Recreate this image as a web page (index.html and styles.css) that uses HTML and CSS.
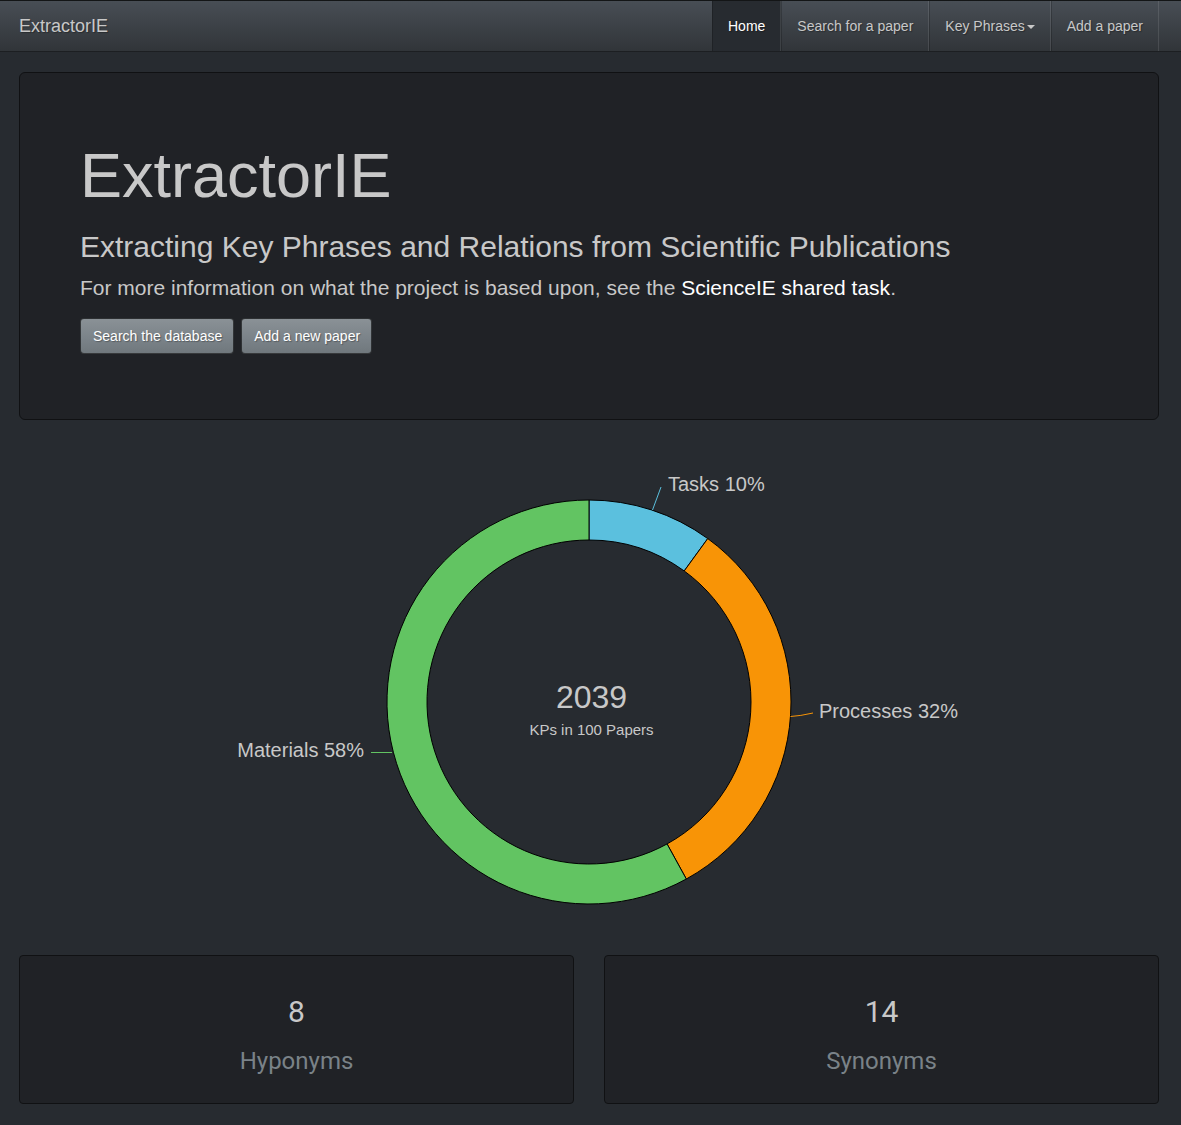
FILE: index.html
```html
<!DOCTYPE html>
<html lang="en">
<head>
<meta charset="utf-8">
<title>ExtractorIE</title>
<link rel="stylesheet" href="styles.css">
</head>
<body>
<nav class="navbar">
  <a class="brand" href="#">ExtractorIE</a>
  <ul class="nav">
    <li class="nav-item active"><a href="#">Home</a></li>
    <li class="nav-item"><a href="#">Search for a paper</a></li>
    <li class="nav-item"><a href="#">Key Phrases<span class="caret"></span></a></li>
    <li class="nav-item"><a href="#">Add a paper</a></li>
  </ul>
</nav>
<main class="container">
  <section class="jumbotron">
    <h1>ExtractorIE</h1>
    <h2>Extracting Key Phrases and Relations from Scientific Publications</h2>
    <p class="lead">For more information on what the project is based upon, see the <a href="#">ScienceIE shared task</a>.</p>
    <div class="actions">
      <a class="btn" href="#">Search the database</a>
      <a class="btn" href="#">Add a new paper</a>
    </div>
  </section>
  <section class="chart">
    <svg class="donut" width="1140" height="535" viewBox="19 420 1140 535" xmlns="http://www.w3.org/2000/svg">
      <path d="M589,500 A202,202 0 0 1 707.74,538.58 L684.22,570.94 A162,162 0 0 0 589,540 Z" fill="#5bc0de" stroke="#000" stroke-width="1"/>
      <path d="M707.74,538.58 A202,202 0 0 1 686.32,879.01 L667.05,843.96 A162,162 0 0 0 684.22,570.94 Z" fill="#f89406" stroke="#000" stroke-width="1"/>
      <path d="M686.32,879.01 A202,202 0 1 1 589,500 L589,540 A162,162 0 1 0 667.05,843.96 Z" fill="#62c462" stroke="#000" stroke-width="1"/>
      <path d="M652.5,510 L661,487" stroke="#5bc0de" stroke-width="1" fill="none"/>
      <path d="M790.5,716.5 Q800,716 813,713" stroke="#f89406" stroke-width="1" fill="none"/>
      <path d="M371,752.5 L392,752.5" stroke="#62c462" stroke-width="1" fill="none"/>
      <text class="lbl" x="668" y="491">Tasks 10%</text>
      <text class="lbl" x="819" y="718">Processes 32%</text>
      <text class="lbl" x="364" y="757" text-anchor="end">Materials 58%</text>
      <text class="total" x="591.5" y="708" text-anchor="middle">2039</text>
      <text class="sub" x="591.5" y="735" text-anchor="middle">KPs in 100 Papers</text>
    </svg>
  </section>
  <section class="stats">
    <div class="card">
      <div class="num">8</div>
      <div class="cap">Hyponyms</div>
    </div>
    <div class="card">
      <div class="num">14</div>
      <div class="cap">Synonyms</div>
    </div>
  </section>
</main>
</body>
</html>
```
FILE: styles.css
```css
* { box-sizing: border-box; }
html, body { margin: 0; padding: 0; }
body {
  background: #272b30;
  color: #c8c8c8;
  font-family: "Liberation Sans", Arial, sans-serif;
  font-size: 14px;
  line-height: 20px;
  height: 1125px;
  overflow: hidden;
}
a { text-decoration: none; color: inherit; }

.navbar {
  height: 52px;
  display: flex;
  align-items: stretch;
  justify-content: space-between;
  padding: 0 22px 0 19px;
  background-image: linear-gradient(#484e55, #3a3f44 60%, #313539);
  border: 1px solid rgba(0,0,0,0.6);
  border-left: 0;
  border-right: 0;
  text-shadow: 1px 1px 1px rgba(0,0,0,0.3);
}
.brand {
  font-size: 18px;
  line-height: 50px;
  color: #c8c8c8;
}
.nav {
  list-style: none;
  margin: 0;
  padding: 0;
  display: flex;
}
.nav-item a {
  display: block;
  height: 50px;
  line-height: 20px;
  padding: 15px 15px;
  color: #c8c8c8;
  border-left: 1px solid rgba(0,0,0,0.2);
  border-right: 1px solid rgba(255,255,255,0.1);
}
.nav-item.active a {
  background: #272b30;
  color: #fff;
}
.caret {
  display: inline-block;
  width: 0;
  height: 0;
  margin-left: 2px;
  vertical-align: middle;
  border-top: 4px solid #c8c8c8;
  border-left: 4px solid transparent;
  border-right: 4px solid transparent;
}

.container {
  padding: 20px 22px 0 19px;
}

.jumbotron {
  background: #202226;
  border: 1px solid #101113;
  border-radius: 6px;
  padding: 48px 60px 48px 60px;
}
.jumbotron h1 {
  margin: 20px 0 10px;
  font-size: 63px;
  line-height: 69px;
  font-weight: 500;
  color: #c8c8c8;
}
.jumbotron h2 {
  margin: 20px 0 10px;
  font-size: 30px;
  line-height: 33px;
  font-weight: 500;
  color: #c8c8c8;
}
.jumbotron .lead {
  margin: 0 0 15px;
  font-size: 21px;
  line-height: 30px;
  font-weight: 300;
}
.jumbotron .lead a { color: #fff; }
.actions {
  display: flex;
  align-items: flex-start;
  gap: 7px;
  margin: 1px 0 17px;
}
.btn {
  display: block;
  height: 36px;
  padding: 8px 11px 8px 12px;
  font-size: 14px;
  line-height: 18px;
  color: #fff;
  background-image: linear-gradient(#8a9196, #7a8288 60%, #70787d);
  border: 1px solid rgba(0,0,0,0.6);
  border-radius: 4px;
  text-shadow: 1px 1px 1px rgba(0,0,0,0.3);
}

.chart { display: flex; }
.donut { display: block; }
.lbl {
  font-family: "Liberation Sans", Arial, sans-serif;
  font-size: 20px;
  fill: #c8c8c8;
}
.total {
  font-family: "Liberation Sans", Arial, sans-serif;
  font-size: 32px;
  fill: #c8c8c8;
}
.sub {
  font-family: "Liberation Sans", Arial, sans-serif;
  font-size: 15px;
  fill: #c8c8c8;
}

.stats {
  display: grid;
  grid-template-columns: 1fr 1fr;
  gap: 30px;
}
.card {
  background: #202226;
  border: 1px solid #101113;
  border-radius: 4px;
  height: 149px;
  padding-top: 38px;
  text-align: center;
  font-family: Roboto, "Liberation Sans", sans-serif;
}
.card .num {
  font-size: 30px;
  line-height: 36px;
  color: #c8c8c8;
}
.card .cap {
  margin-top: 16px;
  font-size: 24px;
  line-height: 30px;
  color: #7a8288;
}
```
